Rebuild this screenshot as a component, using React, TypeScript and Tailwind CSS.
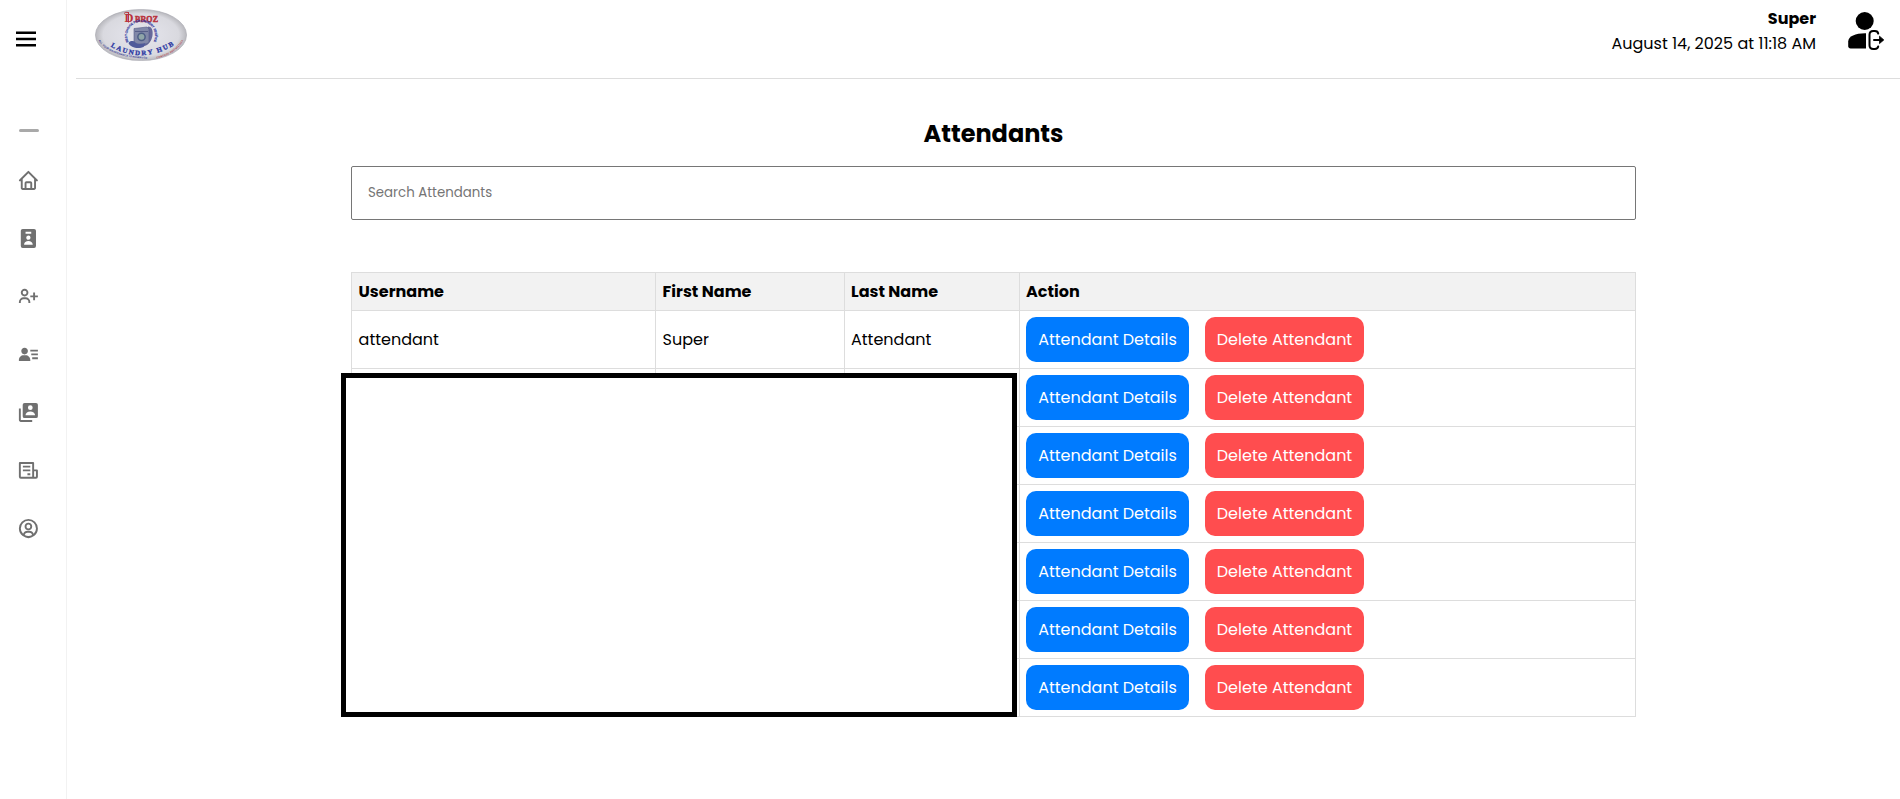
import type { ReactNode } from "react";
import {
  BiHome,
  BiMenu,
  BiSolidUserAccount,
  BiSolidUserBadge,
  BiSolidUserDetail,
  BiUserCircle,
  BiUserPlus,
} from "react-icons/bi";

function NewsIcon({ size }: { size: number }) {
  return (
    <svg width={size} height={size} viewBox="0 0 24 24" fill="none" stroke="currentColor" strokeWidth="2">
      <path d="M17 20V4.2H3V18.8C3 19.4 3.4 19.8 4 19.8H20C20.6 19.8 21 19.4 21 18.8V12H17" strokeLinejoin="round" />
      <path d="M6.2 8H14M6.2 12H14M11 16H14" />
    </svg>
  );
}

const navItems = [
  { label: "Home", Icon: BiHome },
  { label: "Badge", Icon: BiSolidUserBadge },
  { label: "Add user", Icon: BiUserPlus },
  { label: "User details", Icon: BiSolidUserDetail },
  { label: "Accounts", Icon: BiSolidUserAccount },
  { label: "News", Icon: NewsIcon },
  { label: "Profile", Icon: BiUserCircle },
];

const attendants = [
  { username: "attendant", first: "Super", last: "Attendant" },
  ...Array.from({ length: 6 }, () => ({ username: "", first: "", last: "" })),
];

function Logo() {
  return (
    <svg width="92" height="52" viewBox="0 0 92 52" aria-label="DBroz Laundry Hub">
      <defs>
        <radialGradient id="plate" cx="50%" cy="50%" r="52%">
          <stop offset="0" stopColor="#e6e6ee" />
          <stop offset="0.8" stopColor="#d9d9df" />
          <stop offset="1" stopColor="#b0b0b5" />
        </radialGradient>
        <path id="ring" d="M33.6 33 A14 14 0 1 1 58.6 33" />
        <path id="hub" d="M15.5 37.5 Q46 55.5 78.5 36.5" />
        <path id="rimLeft" d="M3.5 31.5 Q14 48.5 53 49.8" />
        <path id="rimRight" d="M61.5 49.4 Q80 46 89 30.5" />
      </defs>
      <ellipse cx="46" cy="26" rx="45.6" ry="25.6" fill="url(#plate)" stroke="#aaaab2" strokeWidth="0.6" />
      <text x="29.5" y="13.2" fontFamily="Liberation Serif, serif" fontWeight="700" fontSize="13.5" fill="#b8323c" textLength="9" lengthAdjust="spacingAndGlyphs">
        D
      </text>
      <path d="M29 4.5Q30.5 2.5 33 3.5M33.5 3V13.5" fill="none" stroke="#b8323c" strokeWidth="1" />
      <text x="40" y="12.500" fontFamily="Liberation Serif, serif" fontWeight="700" fontSize="8" fill="#b8323c" stroke="#b8323c" strokeWidth="0.5" textLength="23">
        BROZ
      </text>
      <text fontFamily="Liberation Sans, sans-serif" fontWeight="700" fontSize="3" fill="#3038a0" stroke="#3038a0" strokeWidth="0.15">
        <textPath href="#ring" textLength="56">
          BEST CHOICE FOR LAUNDRY SERVICE
        </textPath>
      </text>
      <path d="M53 17.5c3.5 0 5 3.5 4.6 8s-2.6 9-6.6 11l-7 2.5-5-2 9-5z" fill="#66699a" />
      <path d="M39 19.5l13-1.5 2 2v13.5l-3 1.5H39z" fill="#8188a8" stroke="#565c88" strokeWidth="0.6" />
      <path d="M40 22.5h13" stroke="#535a86" strokeWidth="0.9" />
      <circle cx="46.5" cy="27.8" r="4.4" fill="#4e5f86" />
      <circle cx="46.5" cy="27.8" r="2.9" fill="#8fa5a8" />
      <path d="M33.5 34c1.5-2.6 5-2.4 7-.6s6 2 10 .6l-2 4c-5 2-13 1-15-4z" fill="#4f5a9a" />
      <text fontFamily="Liberation Serif, serif" fontWeight="700" fontSize="6.8" fill="#2936a2" stroke="#2936a2" strokeWidth="0.3">
        <textPath href="#hub" textLength="67">
          LAUNDRY HUB
        </textPath>
      </text>
      <text fontFamily="Liberation Sans, sans-serif" fontWeight="700" fontSize="2.6" fill="#343b91">
        <textPath href="#rimLeft" textLength="54">
          ALL YOUR MAINTENANCE IS RESERVED
        </textPath>
      </text>
      <text fontFamily="Liberation Sans, sans-serif" fontWeight="700" fontSize="2.6" fill="#b3414b">
        <textPath href="#rimRight" textLength="33">
          CONTACT 09074417224
        </textPath>
      </text>
    </svg>
  );
}

function UserLogoutIcon() {
  return (
    <svg width="37" height="39" viewBox="0 0 37 39" aria-label="Log out">
      <circle cx="16.7" cy="9" r="9" />
      <path d="M18 21.2V36.4H2.6C1 36.4.2 35.6.2 34V29.5C.2 24 8 21 18 21.2Z" />
      <path
        d="M30.2 21.6C30 20 28.700 19 26.8 19H25.2C22.9 19 21.5 20.4 21.5 22.7V33.3C21.5 35.6 22.9 37 25.2 37H26.8C28.700 37 30 36 30.2 34.4"
        fill="none"
        stroke="#000"
        strokeWidth="2"
        strokeLinecap="round"
      />
      <path d="M26 27.9H34" fill="none" stroke="#000" strokeWidth="2" strokeLinecap="round" />
      <path d="M31.5 24.2L35.8 27.9L31.5 31.6Z" stroke="#000" strokeWidth="0.8" strokeLinejoin="round" />
    </svg>
  );
}

function HeadCell({ children }: { children: ReactNode }) {
  return (
    <th className="h-[38px] border-r border-b border-[#ddd] bg-[#f2f2f2] px-1.5 py-0 text-left leading-6 font-bold whitespace-nowrap">
      {children}
    </th>
  );
}

function Cell({ children }: { children: ReactNode }) {
  return <td className="h-[58px] border-r border-b border-[#ddd] px-1.5 py-0 leading-6 whitespace-nowrap">{children}</td>;
}

export default function App() {
  return (
    <div className="flex h-[799px] w-[1900px] overflow-hidden bg-white font-[Poppins,Inter,sans-serif] text-base text-black">
      <aside className="flex w-[67px] shrink-0 flex-col border-r border-[#f2f2f2]">
        <button className="mt-[24px] ml-[11px] size-[30px]" aria-label="Menu">
          <BiMenu size={30} />
        </button>
        <div className="mt-[75px] ml-[19px] h-[3px] w-5 rounded-sm bg-[#a9a9a9]" />
        <nav className="mt-[19px] ml-[17px] flex flex-col text-[#707070]">
          {navItems.map(({ label, Icon }) => (
            <a key={label} aria-label={label} className="flex h-[58px] w-[23px] items-center justify-center">
              <Icon size={22.8} />
            </a>
          ))}
        </nav>
      </aside>

      <div className="flex flex-1 flex-col pl-[9px]">
        <header className="flex h-[79px] shrink-0 items-start border-b border-[#ddd] pl-[19px]">
          <div className="mt-[9px]">
            <Logo />
          </div>
          <div className="mt-1.5 mr-8 ml-auto text-right leading-[25px]">
            <p className="font-bold">Super</p>
            <p>August 14, 2025 at 11:18 AM</p>
          </div>
          <button className="mt-3 mr-[15px]" aria-label="Log out">
            <UserLogoutIcon />
          </button>
        </header>

        <main className="ml-[275px] flex w-[1285px] flex-col">
          <h1 className="mt-[37px] text-center text-2xl leading-9 font-bold">Attendants</h1>
          <input
            className="mt-[14px] h-[54px] rounded-[2px] border border-[#767676] px-4 text-[13.333px] placeholder:text-[#757575]"
            placeholder="Search Attendants"
          />
          <div className="relative mt-[52px]">
            <table className="w-[1285px] table-fixed border-separate border-spacing-0 border-t border-l border-[#ddd]">
              <colgroup>
                <col className="w-[304px]" />
                <col className="w-[189px]" />
                <col className="w-[175px]" />
                <col className="w-[616px]" />
              </colgroup>
              <thead>
                <tr>
                  <HeadCell><span className="pl-[0.6px]">Username</span></HeadCell>
                  <HeadCell><span className="pl-[0.6px]">First Name</span></HeadCell>
                  <HeadCell>Last Name</HeadCell>
                  <HeadCell>Action</HeadCell>
                </tr>
              </thead>
              <tbody>
                {attendants.map((a, i) => (
                  <tr key={i}>
                    <Cell><span className="pl-[0.6px]">{a.username}</span></Cell>
                    <Cell><span className="pl-[0.6px]">{a.first}</span></Cell>
                    <Cell>{a.last}</Cell>
                    <Cell>
                      <div className="flex gap-4 text-white">
                        <button className="h-[45px] w-[163px] rounded-[10px] bg-[#007bff]">Attendant Details</button>
                        <button className="h-[45px] w-[159px] rounded-[10px] bg-[#ff4d4f]">Delete Attendant</button>
                      </div>
                    </Cell>
                  </tr>
                ))}
              </tbody>
            </table>
            <div className="absolute top-[101px] left-[-10px] h-[344px] w-[676px] border-[5px] border-black bg-white" />
          </div>
        </main>
      </div>
    </div>
  );
}
